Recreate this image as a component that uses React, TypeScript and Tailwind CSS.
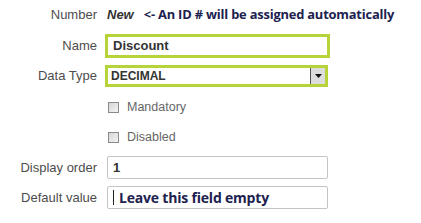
const label = "w-[97px] shrink-0 text-right text-[13px] text-[#4d4d4d] [font-family:Arial,'Liberation_Sans',sans-serif]";

export default function App() {
  return (
    <div className="w-[421px] h-[223px] bg-white relative [font-family:'Liberation_Sans',Arial,sans-serif]">
      {/* Number */}
      <div className="flex items-center h-[30px]">
        <div className={label}>Number</div>
        <span className="ml-[10px] text-[13px] italic font-bold text-[#333]">New</span>
        <span className="ml-[10px] text-[12.9px] font-bold text-[#20214f] [font-family:'Open_Sans',sans-serif] tracking-[-0.2px]">
          &lt;- An ID # will be assigned automatically
        </span>
      </div>

      {/* Name */}
      <div className="flex items-center mt-[4px] h-[24px]">
        <div className={label}>Name</div>
        <div className="ml-[8px] w-[225px] h-[24px] border-[3px] border-[#b6d43a] bg-white flex items-center pl-[5px]">
          <span className="text-[13px] font-bold text-[#333]">Discount</span>
        </div>
      </div>

      {/* Data Type */}
      <div className="flex items-center mt-[7px] h-[22px]">
        <div className={label}>Data Type</div>
        <div className="ml-[8px] w-[223px] h-[22px] border-[3px] border-[#b6d43a] bg-white flex items-center">
          <span className="flex-1 pl-[3px] text-[12px] font-bold text-[#333]">DECIMAL</span>
          <div className="w-[15px] h-full border-l border-[#555] bg-[#dcdcdc] flex items-center justify-center">
            <svg width="7" height="4" viewBox="0 0 7 4">
              <path d="M0 0h7L3.5 4z" fill="#111" />
            </svg>
          </div>
        </div>
      </div>

      {/* Mandatory */}
      <div className="flex items-center mt-[14px] h-[12px] pl-[108px]">
        <div className="w-[11px] h-[11px] border border-[#8a8a8a] bg-gradient-to-br from-[#d6d6d6] to-[#f4f4f4]" />
        <span className="ml-[8px] text-[12.5px] text-[#666]">Mandatory</span>
      </div>

      {/* Disabled */}
      <div className="flex items-center mt-[18px] h-[12px] pl-[108px]">
        <div className="w-[11px] h-[11px] border border-[#8a8a8a] bg-gradient-to-br from-[#d6d6d6] to-[#f4f4f4]" />
        <span className="ml-[8px] text-[12.5px] text-[#666]">Disabled</span>
      </div>

      {/* Display order */}
      <div className="flex items-center mt-[13px] h-[23px]">
        <div className={label}>Display order</div>
        <div className="ml-[10px] w-[221px] h-[23px] border border-[#c4c4c4] rounded-[2px] bg-white flex items-center pl-[5px]">
          <span className="text-[13px] font-bold text-[#333]">1</span>
        </div>
      </div>

      {/* Default value */}
      <div className="flex items-center mt-[7px] h-[23px]">
        <div className={label}>Default value</div>
        <div className="ml-[10px] w-[221px] h-[23px] border border-[#c4c4c4] rounded-[2px] bg-white flex items-center pl-[5px]">
          <span className="w-px h-[15px] bg-[#222]" />
          <span className="ml-[5px] text-[14px] font-bold text-[#20214f] [font-family:'Open_Sans',sans-serif] tracking-[-0.2px]">
            Leave this field empty
          </span>
        </div>
      </div>
    </div>
  );
}
